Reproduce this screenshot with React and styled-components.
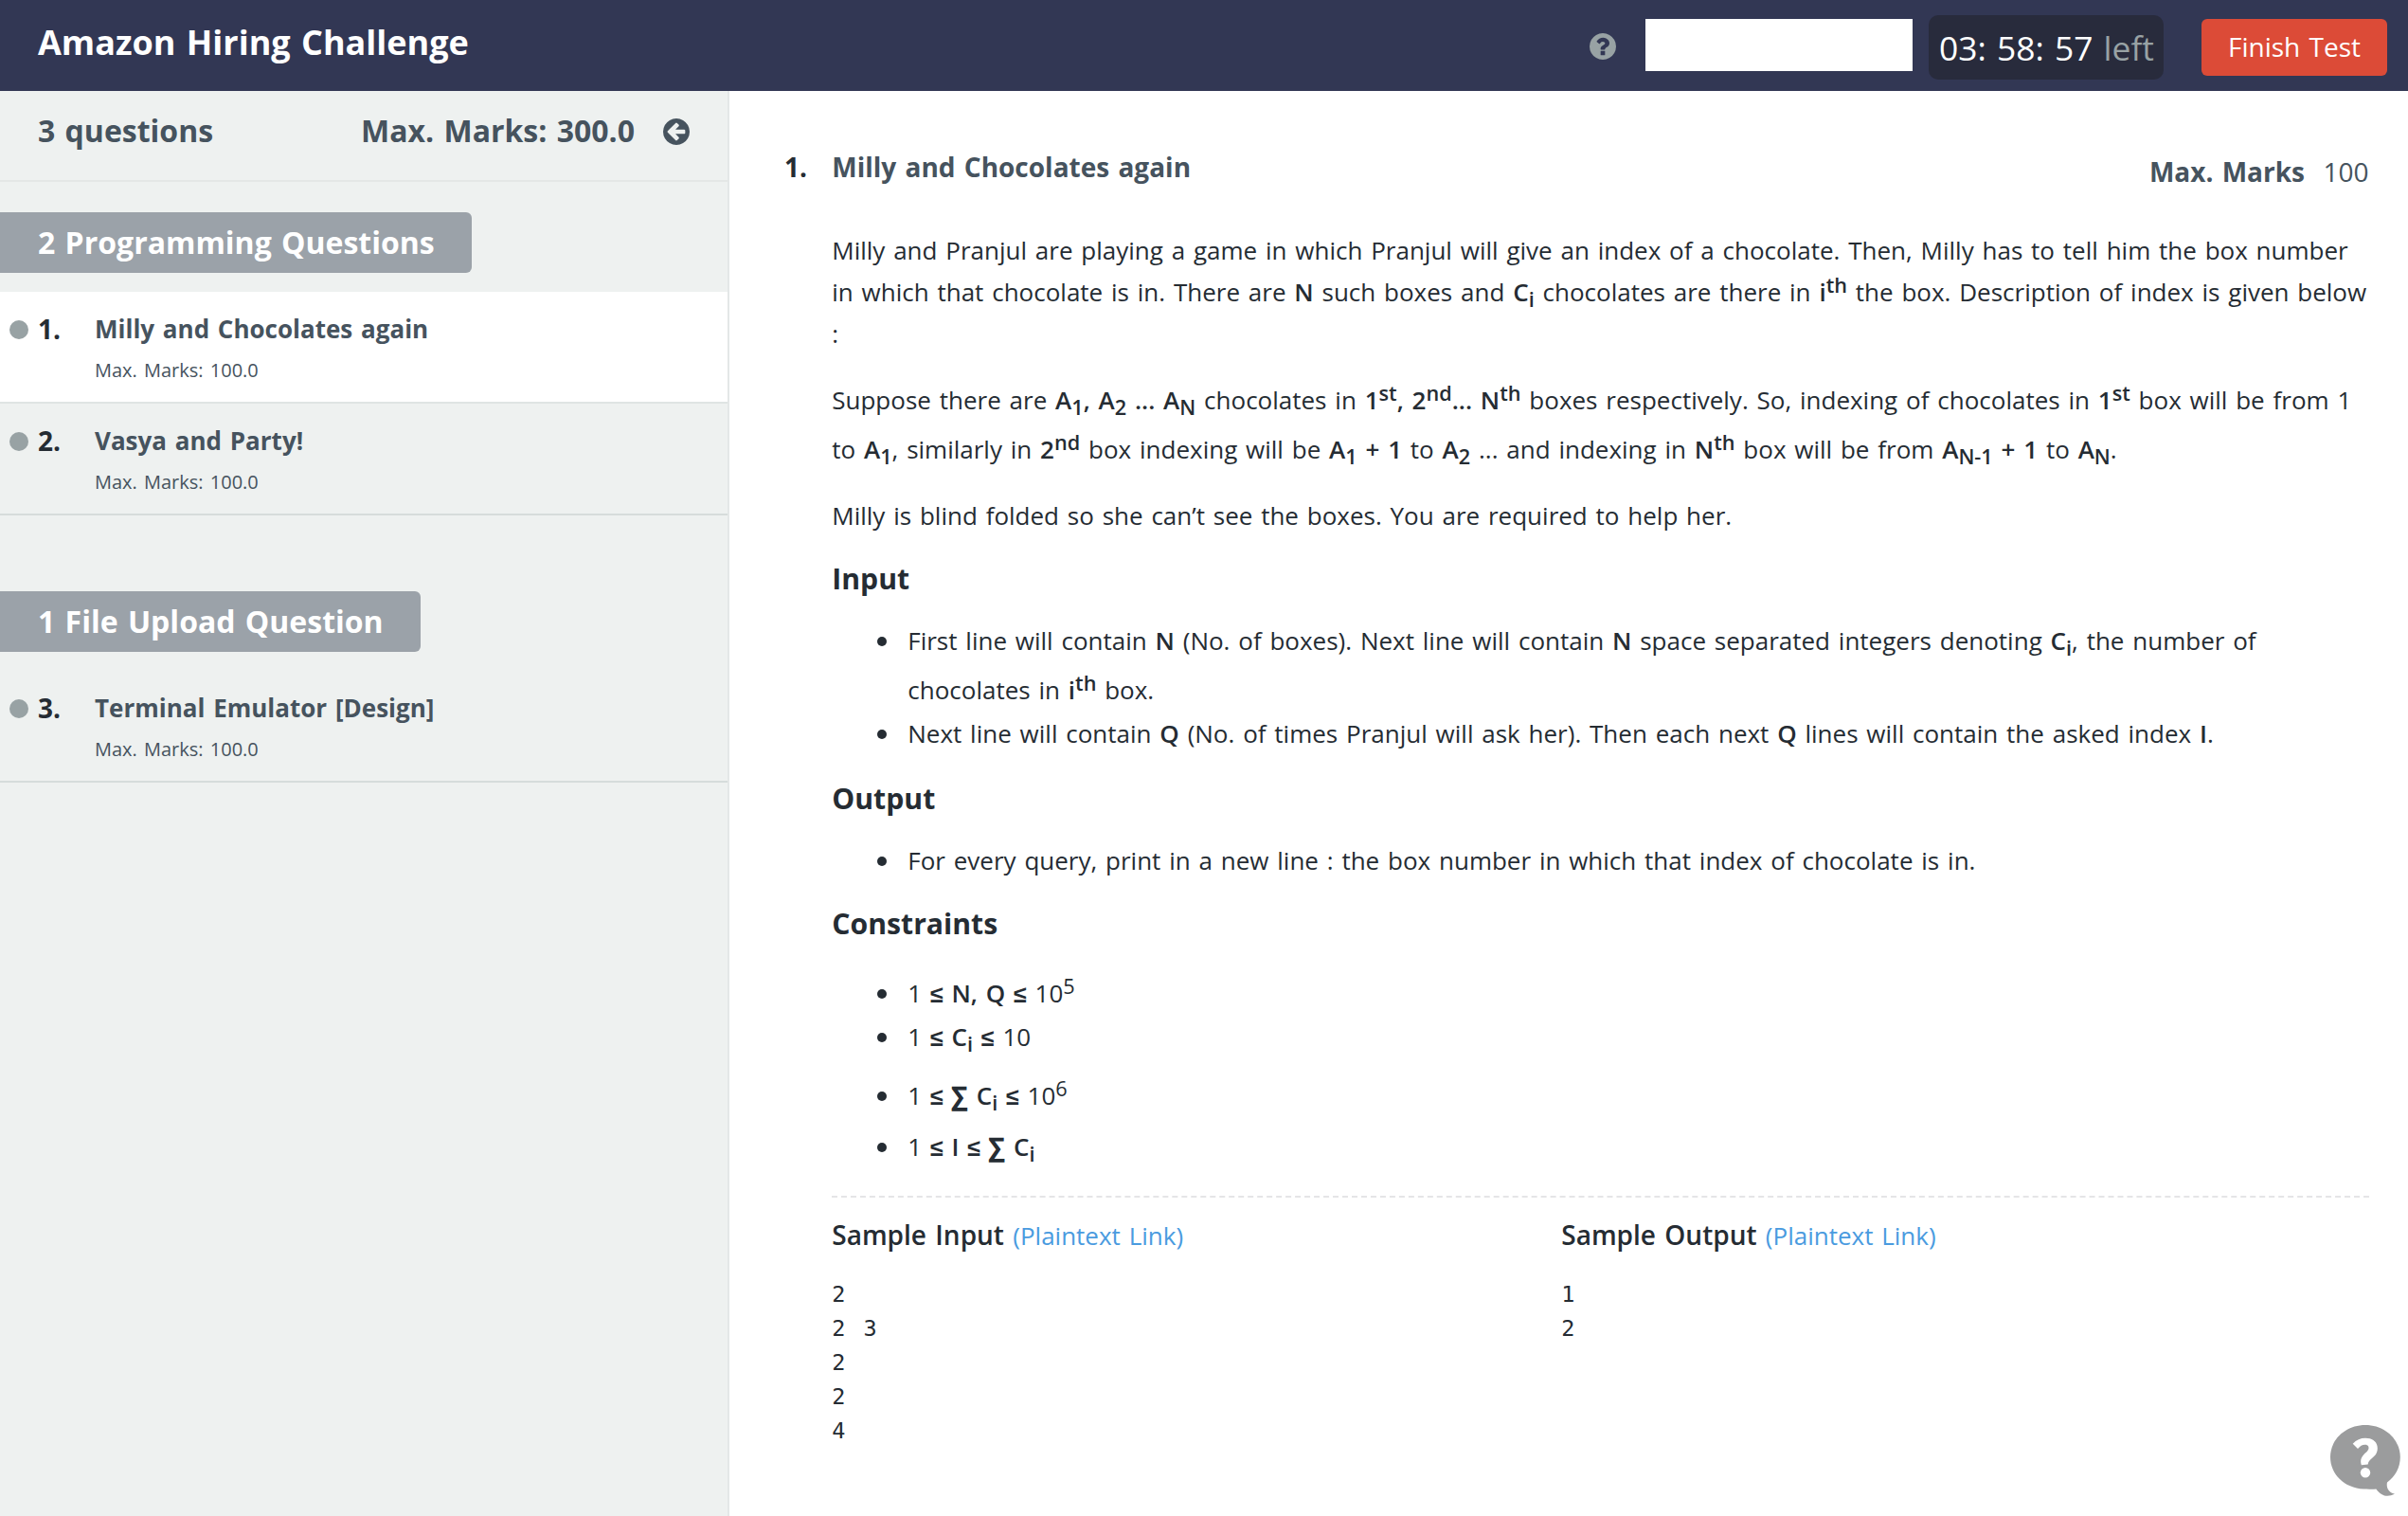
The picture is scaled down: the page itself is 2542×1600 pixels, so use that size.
import React from 'react';
import styled, { createGlobalStyle } from 'styled-components';

const GlobalStyle = createGlobalStyle`
  *, *::before, *::after { box-sizing: border-box; }
  body {
    margin: 0;
    background: #fff;
    color: #252c33;
    font: 400 26px/44px "Open Sans", "Noto Sans", sans-serif;
    word-spacing: 2px;
  }
  h1, h2, h3, p, ul, ol, pre { margin: 0; padding: 0; }
  b { font-weight: 600; }
  sub, sup { font-size: 21.67px; line-height: 22px; }
  sub { vertical-align: -6px; }
  sup { vertical-align: 9.5px; }
`;

const Page = styled.div`
  display: flex;
  flex-direction: column;
  height: 1600px;
  overflow: hidden;
`;

const Header = styled.header`
  display: flex;
  justify-content: space-between;
  height: 96px;
  padding: 0 22px 0 40px;
  background: #323754;
`;

const Title = styled.h1`
  color: #fff;
  font-size: 36px;
  font-weight: 700;
  line-height: 90px;
`;

const Tools = styled.div`
  display: flex;
  align-items: flex-start;
`;

const HelpIcon = styled.svg`
  width: 28px;
  height: 28px;
  margin: 35px 31px 0 0;
  fill: #98a2a4;
`;

const UserBox = styled.div`
  width: 282px;
  height: 55px;
  margin: 20px 17px 0 0;
  background: #fff;
`;

const Timer = styled.div`
  width: 248px;
  height: 68px;
  margin: 16px 40px 0 0;
  padding-left: 11px;
  border-radius: 10px;
  background: #282b3c;
  color: #fff;
  font-size: 35.4px;
  line-height: 69px;
  white-space: nowrap;
`;

const TimerUnit = styled.span`
  color: #98a2a4;
`;

const FinishButton = styled.button`
  width: 196px;
  height: 60px;
  margin: 20px 0 0;
  padding: 0 0 2px;
  border: 0;
  border-radius: 6px;
  background: #dc4b37;
  color: #fff;
  font: inherit;
  font-size: 28px;
  line-height: 58px;
  word-spacing: 2px;
`;

const Body = styled.div`
  display: flex;
  flex: 1;
`;

const Sidebar = styled.aside`
  width: 770px;
  flex: none;
  border-right: 2px solid #e4e7e7;
  background: #eef1f0;
`;

const Summary = styled.div`
  display: flex;
  align-items: flex-start;
  height: 96px;
  padding: 0 40px;
  border-bottom: 2px solid #e4e7e6;
  color: #46535e;
  font-size: 32px;
  font-weight: 700;
  line-height: 84px;
`;

const Total = styled.span`
  margin-left: auto;
`;

const CollapseIcon = styled.svg`
  width: 28px;
  height: 28px;
  margin: 29px 0 0 30px;
  fill: #46535e;
`;

const Group = styled.section`
  display: flex;
  flex-direction: column;
  align-items: flex-start;
  margin-top: ${(p) => p.$gap}px;
`;

const Tag = styled.h2`
  height: 64px;
  margin-bottom: 20px;
  padding: 0 39px 0 40px;
  border-radius: 0 6px 6px 0;
  background: #9ba2a9;
  color: #fff;
  font-size: 32px;
  font-weight: 700;
  line-height: 63px;
`;

const Item = styled.div`
  display: grid;
  grid-template-columns: 30px 60px 1fr;
  align-self: stretch;
  align-items: start;
  height: 118px;
  padding: 16px 0 0 10px;
  border-bottom: 2px solid ${(p) => (p.$active ? '#dfe4e3' : '#d6dcdb')};
  background: ${(p) => (p.$active ? '#fff' : 'transparent')};
`;

const Dot = styled.span`
  width: 20px;
  height: 20px;
  margin-top: 14px;
  border-radius: 50%;
  background: #98a2a4;
`;

const ItemNumber = styled.span`
  font-size: 28px;
  font-weight: 700;
  line-height: 46px;
`;

const ItemTitle = styled.div`
  padding-top: 1px;
  color: #46535e;
  font-weight: 700;
`;

const ItemMarks = styled.div`
  color: #46535e;
  font-size: 20px;
`;

const Main = styled.main`
  flex: 1;
  padding: 57px 41.5px 0 58px;
`;

const QuestionHead = styled.div`
  display: flex;
  align-items: flex-start;
  height: 89px;
  color: #46535e;
  font-size: 28px;
  font-weight: 700;
`;

const QuestionNumber = styled.span`
  width: 50.25px;
  color: #252c33;
  line-height: 46px;
`;

const QuestionTitle = styled.span`
  line-height: 46px;
`;

const QuestionMarks = styled.div`
  display: flex;
  gap: 19.5px;
  margin: 6px 0 0 auto;
`;

const MarksValue = styled.span`
  font-weight: 400;
`;

const Statement = styled.div`
  padding-left: 50.25px;
  word-spacing: 2.06px;
`;

const Paragraph = styled.p`
  margin-bottom: 22px;
  line-height: ${(p) => p.$leading || 44}px;
`;

const Heading = styled.h3`
  margin-top: ${(p) => p.$gap || 0}px;
  font-size: 30.2px;
  font-weight: 700;
  line-height: 46px;
`;

const List = styled.ul`
  margin-top: ${(p) => p.$gap}px;
  padding-left: 80px;
  list-style: none;
`;

const Entry = styled.li`
  margin-top: ${(p) => p.$gap || 0}px;
  line-height: ${(p) => p.$leading || 40}px;

  &::before {
    content: "";
    display: inline-block;
    width: 10px;
    height: 10px;
    margin: 0 22.5px 0 -32.5px;
    border-radius: 50%;
    background: #252c33;
    vertical-align: 4px;
  }
`;

const Leq = styled.span`
  font-family: "Liberation Sans", sans-serif;
  font-size: 25px;
  font-weight: 700;
  line-height: 20px;
`;

const Sum = styled.span`
  padding-right: 1px;
  line-height: 20px;
  -webkit-text-stroke: 1.2px #252c33;
`;

const Samples = styled.div`
  display: grid;
  grid-template-columns: 770px 1fr;
  margin-top: 32px;
  padding-top: 17px;
  border-top: 2px dashed #e5e5e7;
`;

const SampleTitle = styled.div`
  font-size: 28px;
  font-weight: 600;
`;

const Link = styled.a`
  color: #4a9bdf;
  font-size: 26px;
  font-weight: 400;
`;

const Code = styled.pre`
  margin-top: 22px;
  font: 23.5px/36px "DejaVu Sans Mono", monospace;
  letter-spacing: 1.5px;
`;

const HelpBubble = styled.svg`
  position: absolute;
  left: 2460px;
  top: 1504px;
  width: 76px;
  height: 76px;
`;

const RING =
  'q0 209-103 385.5t-279.5 279.5-385.5 103-385.5-103-279.5-279.5-103-385.5 103-385.5 279.5-279.5 385.5-103 385.5 103 279.5 279.5 103 385.5z';

const GROUPS = [
  {
    label: '2 Programming Questions',
    gap: 32,
    items: [
      { n: 1, title: 'Milly and Chocolates again', active: true },
      { n: 2, title: 'Vasya and Party!' },
    ],
  },
  {
    label: '1 File Upload Question',
    gap: 80,
    items: [{ n: 3, title: 'Terminal Emulator [Design]' }],
  },
];

export default function App() {
  return (
    <Page>
      <GlobalStyle />
      <Header>
        <Title>Amazon Hiring Challenge</Title>
        <Tools>
          <HelpIcon viewBox="128 128 1536 1536">
            <path
              d={
                'M1024 1376v-192q0-14-9-23t-23-9h-192q-14 0-23 9t-9 23v192q0 14 9 23t23 9h192q14 0 23-9t9-23zm256-672q0-88-55.5-163t-138.5-116-170-41q-243 0-371 213-15 24 8 42l132 100q7 6 19 6 16 0 25-12 53-68 86-92 34-24 86-24 48 0 85.5 26t37.5 59q0 38-20 61t-68 45q-63 28-115.5 86.5t-52.5 125.5v36q0 14 9 23t23 9h192q14 0 23-9t9-23q0-19 21.5-49.5t54.5-49.5q32-18 49-28.5t46-35 44.5-48 28-60.5 12.5-81zm384 192' +
                RING
              }
            />
          </HelpIcon>
          <UserBox />
          <Timer>
            03: 58: 57 <TimerUnit>left</TimerUnit>
          </Timer>
          <FinishButton>Finish Test</FinishButton>
        </Tools>
      </Header>
      <Body>
        <Sidebar>
          <Summary>
            <span>3 questions</span>
            <Total>Max. Marks: 300.0</Total>
            <CollapseIcon viewBox="128 128 1536 1536">
              <path
                d={
                  'M1408 960v-128q0-26-19-45t-45-19h-502l189-189q19-19 19-45t-19-45l-91-91q-18-18-45-18t-45 18l-362 362-91 91q-18 18-18 45t18 45l91 91 362 362q18 18 45 18t45-18l91-91q18-18 18-45t-18-45l-189-189h502q26 0 45-19t19-45zm256-64' +
                  RING
                }
              />
            </CollapseIcon>
          </Summary>
          {GROUPS.map((group) => (
            <Group key={group.label} $gap={group.gap}>
              <Tag>{group.label}</Tag>
              {group.items.map((item) => (
                <Item key={item.n} $active={item.active}>
                  <Dot />
                  <ItemNumber>{item.n}.</ItemNumber>
                  <div>
                    <ItemTitle>{item.title}</ItemTitle>
                    <ItemMarks>Max. Marks: 100.0</ItemMarks>
                  </div>
                </Item>
              ))}
            </Group>
          ))}
        </Sidebar>
        <Main>
          <QuestionHead>
            <QuestionNumber>1.</QuestionNumber>
            <QuestionTitle>Milly and Chocolates again</QuestionTitle>
            <QuestionMarks>
              <span>Max. Marks</span>
              <MarksValue>100</MarksValue>
            </QuestionMarks>
          </QuestionHead>
          <Statement>
            <Paragraph>
              Milly and Pranjul are playing a game in which Pranjul will give an index of a
              chocolate. Then, Milly has to tell him the box number in which that chocolate is in.
              There are <b>N</b> such boxes and <b>C<sub>i</sub></b> chocolates are there in{' '}
              <b>i<sup>th</sup></b> the box. Description of index is given below :
            </Paragraph>
            <Paragraph $leading={52}>
              Suppose there are <b>A<sub>1</sub>, A<sub>2</sub> ... A<sub>N</sub></b> chocolates in{' '}
              <b>1<sup>st</sup>, 2<sup>nd</sup>... N<sup>th</sup></b> boxes respectively. So,
              indexing of chocolates in <b>1<sup>st</sup></b> box will be from 1 to{' '}
              <b>A<sub>1</sub></b>, similarly in <b>2<sup>nd</sup></b> box indexing will be{' '}
              <b>A<sub>1</sub> + 1</b> to <b>A<sub>2</sub></b> ... and indexing in{' '}
              <b>N<sup>th</sup></b> box will be from <b>A<sub>N-1</sub> + 1</b> to{' '}
              <b>A<sub>N</sub></b>.
            </Paragraph>
            <Paragraph>
              Milly is blind folded so she can’t see the boxes. You are required to help her.
            </Paragraph>
            <Heading>Input</Heading>
            <List $gap={16}>
              <Entry $leading={52}>
                First line will contain <b>N</b> (No. of boxes). Next line will contain <b>N</b>{' '}
                space separated integers denoting <b>C<sub>i</sub></b>, the number of chocolates in{' '}
                <b>i<sup>th</sup></b> box.
              </Entry>
              <Entry>
                Next line will contain <b>Q</b> (No. of times Pranjul will ask her). Then each next{' '}
                <b>Q</b> lines will contain the asked index <b>I</b>.
              </Entry>
            </List>
            <Heading $gap={26}>Output</Heading>
            <List $gap={22}>
              <Entry>
                For every query, print in a new line : the box number in which that index of
                chocolate is in.
              </Entry>
            </List>
            <Heading $gap={24}>Constraints</Heading>
            <List $gap={30}>
              <Entry>
                1 <Leq>≤</Leq> <b>N, Q</b> <Leq>≤</Leq> 10<sup>5</sup>
              </Entry>
              <Entry $gap={6}>
                1 <Leq>≤</Leq> <b>C<sub>i</sub></b> <Leq>≤</Leq> 10
              </Entry>
              <Entry $gap={22}>
                1 <Leq>≤</Leq> <b><Sum>∑</Sum> C<sub>i</sub></b> <Leq>≤</Leq> 10<sup>6</sup>
              </Entry>
              <Entry $gap={14}>
                1 <Leq>≤</Leq> <b>I</b> <Leq>≤</Leq> <b><Sum>∑</Sum> C<sub>i</sub></b>
              </Entry>
            </List>
            <Samples>
              <div>
                <SampleTitle>
                  Sample Input <Link>(Plaintext Link)</Link>
                </SampleTitle>
                <Code>{'2\n2 3\n2\n2\n4'}</Code>
              </div>
              <div>
                <SampleTitle>
                  Sample Output <Link>(Plaintext Link)</Link>
                </SampleTitle>
                <Code>{'1\n2'}</Code>
              </div>
            </Samples>
          </Statement>
        </Main>
      </Body>
      <HelpBubble viewBox="0 0 76 76">
        <path
          fill="#9b9c9d"
          d="M37 0C57.500 0 73.800 15 73.800 33.800C73.800 45 68.500 54.500 60 60.500C59 65 60.500 71 68 72.800C60 76.500 54 75 48.300 67.400C42 68 39 67.700 35 67.600C15 66.500 0 52 0 33.800C0 15 16.500 0 37 0Z"
        />
        <path
          fill="#fff"
          d="M23.700 19.700C27.500 15.500 32 13.700 37 13.700C45 13.700 49.800 18 49.800 24.500C49.800 30 47 32.500 44 35C41.500 37 40 38.500 39.700 41.500L32.800 42.300C31.300 37.500 32.500 34 35.500 31C38 28.500 40.500 27 40.500 24C40.500 21.500 38.800 20.800 36.500 20.800C33.500 20.800 31.500 22.300 29 25Z"
        />
        <circle cx="37" cy="50.300" r="5.200" fill="#fff" />
      </HelpBubble>
    </Page>
  );
}
